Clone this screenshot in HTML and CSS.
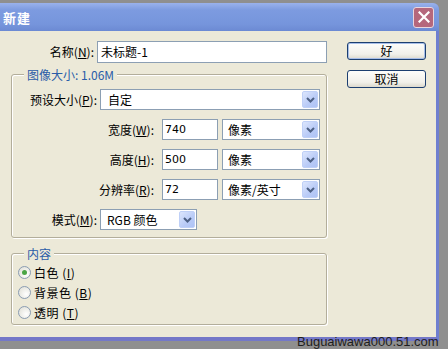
FILE: index.html
```
<!DOCTYPE html>
<html lang="zh-CN">
	<head>
		<meta charset="UTF-8" />
		<title>新建</title>
		<link rel="stylesheet" href="styles.css">
	</head>
	<body>
		<div class="window">
			<div class="titlebar">
				<span class="title">新建</span>
				<span class="close">
					<svg width="12" height="12" viewBox="0 0 12 12"><path d="M1.5 1.5 L10.5 10.5 M10.5 1.5 L1.5 10.5" stroke="#fff" stroke-width="2.2" stroke-linecap="square"/></svg>
				</span>
			</div>
			<div class="dialog">
				<div class="form">
					<div class="row name-row">
						<label class="lbl lbl-name">名称(<u>N</u>):</label>
						<div class="field field-name">未标题-1</div>
					</div>

					<div class="group group-size">
						<span class="legend">图像大小: 1.06M</span>
						<div class="row">
							<label class="lbl lbl-short">预设大小(<u>P</u>):</label>
							<div class="select select-preset"><span>自定</span><span class="arrow"><svg width="9" height="6" viewBox="0 0 9 6"><path d="M1 1 L4.5 4.5 L8 1" fill="none" stroke="#4d6185" stroke-width="2"/></svg></span></div>
						</div>
						<div class="row">
							<label class="lbl lbl-long">宽度(<u>W</u>):</label>
							<div class="field field-num">740</div>
							<div class="select select-unit"><span>像素</span><span class="arrow"><svg width="9" height="6" viewBox="0 0 9 6"><path d="M1 1 L4.5 4.5 L8 1" fill="none" stroke="#4d6185" stroke-width="2"/></svg></span></div>
						</div>
						<div class="row">
							<label class="lbl lbl-long">高度(<u>H</u>):</label>
							<div class="field field-num">500</div>
							<div class="select select-unit"><span>像素</span><span class="arrow"><svg width="9" height="6" viewBox="0 0 9 6"><path d="M1 1 L4.5 4.5 L8 1" fill="none" stroke="#4d6185" stroke-width="2"/></svg></span></div>
						</div>
						<div class="row">
							<label class="lbl lbl-long">分辨率(<u>R</u>):</label>
							<div class="field field-num">72</div>
							<div class="select select-unit"><span>像素/英寸</span><span class="arrow"><svg width="9" height="6" viewBox="0 0 9 6"><path d="M1 1 L4.5 4.5 L8 1" fill="none" stroke="#4d6185" stroke-width="2"/></svg></span></div>
						</div>
						<div class="row">
							<label class="lbl lbl-short">模式(<u>M</u>):</label>
							<div class="select select-mode"><span>RGB 颜色</span><span class="arrow"><svg width="9" height="6" viewBox="0 0 9 6"><path d="M1 1 L4.5 4.5 L8 1" fill="none" stroke="#4d6185" stroke-width="2"/></svg></span></div>
						</div>
					</div>

					<div class="group group-content">
						<span class="legend">内容</span>
						<div class="radio-row"><span class="radio checked"></span>白色 (<u>I</u>)</div>
						<div class="radio-row"><span class="radio"></span>背景色 (<u>B</u>)</div>
						<div class="radio-row"><span class="radio"></span>透明 (<u>T</u>)</div>
					</div>
				</div>

				<div class="actions">
					<button class="btn btn-default">好</button>
					<button class="btn">取消</button>
				</div>
			</div>
		</div>
		<div class="watermark">Buguaiwawa000.51.com</div>
	</body>
</html>
```

FILE: styles.css
```
/* XP style "new document" dialog */
body {
	margin: 0;
	padding: 3px 0 0 0;
	background-color: #8f8f8f;
	font-family: "Noto Sans CJK SC", "DejaVu Sans", sans-serif;
	font-size: 12px;
	color: #000;
	height: 346px;
	position: relative;
	overflow: hidden;
}
.window {
	width: 436px;
	border-right: 3px solid #6f7fd0;
	border-bottom: 4px solid #7478c8;
	border-top-right-radius: 7px;
}
.titlebar {
	height: 28px;
	display: flex;
	align-items: center;
	justify-content: space-between;
	padding: 0 2px 0 3px;
	background: linear-gradient(#9ab2ec, #7d9be0 25%, #7695dc 75%, #6c8ad3);
	border-top-right-radius: 6px;
	margin-right: -3px;
}
.title {
	color: #fff;
	font-weight: bold;
	font-size: 13px;
	letter-spacing: 1px;
}
.close {
	width: 19px;
	height: 19px;
	margin-right: 3px;
	border: 1px solid #e9d6de;
	border-radius: 3px;
	background: #b5677c;
	display: flex;
	align-items: center;
	justify-content: center;
}
.dialog {
	height: 306px;
	background-color: #ece9d8;
	display: flex;
}
.form {
	width: 330px;
	padding-top: 10px;
}
.row {
	display: flex;
	align-items: center;
	height: 21px;
}
.name-row {
	height: 22px;
}
.lbl {
	text-align: right;
	line-height: 14px;
	padding-right: 3px;
	white-space: nowrap;
}
.lbl-name {
	width: 94px;
}
.lbl-short {
	width: 85px;
}
.lbl-long {
	width: 142px;
	padding-right: 8px;
}
.field {
	box-sizing: border-box;
	height: 100%;
	background: #fff;
	border: 1px solid #8c9fb3;
	padding: 0 3px;
	line-height: 19px;
}
.field-name {
	width: 230px;
}
.field-num {
	width: 56px;
	font-family: "DejaVu Sans", sans-serif;
	font-size: 11px;
	padding-left: 2px;
}
.select {
	box-sizing: border-box;
	height: 100%;
	background: #fff;
	border: 1px solid #8c9fb3;
	display: flex;
	align-items: center;
	justify-content: space-between;
	padding: 0 1px 0 7px;
}
.select-preset {
	width: 220px;
}
.select-unit {
	width: 98px;
	margin-left: 4px;
	padding-left: 5px;
}
.select-mode {
	width: 97px;
	padding-left: 6px;
}
.arrow {
	box-sizing: border-box;
	width: 16px;
	height: 17px;
	border: 1px solid #bfd0f7;
	border-radius: 2px;
	background: linear-gradient(135deg, #dce6fd, #b9cbf7 60%, #aec3f5);
	display: flex;
	align-items: center;
	justify-content: center;
}
.group {
	position: relative;
	box-sizing: border-box;
	margin-left: 11px;
	width: 316px;
	border: 1px solid #b3ae9b;
	border-radius: 3px;
	box-shadow: inset 1px 1px 0 #fff, 1px 1px 0 #fff;
}
.group-size {
	margin-top: 11px;
	height: 164px;
	padding-top: 14px;
	display: flex;
	flex-direction: column;
	gap: 9px;
}
.group-content {
	margin-top: 15px;
	height: 72px;
	padding-top: 8px;
}
/* legend sits on top of the group border */
.legend {
	position: absolute;
	top: -8px;
	left: 12px;
	padding: 0 3px;
	background: #ece9d8;
	color: #2a5ca8;
	line-height: 15px;
}
.radio-row {
	display: flex;
	align-items: center;
	height: 20px;
	padding-left: 6px;
	letter-spacing: 0.5px;
}
.radio {
	box-sizing: border-box;
	width: 13px;
	height: 13px;
	border: 1px solid #8a9cb2;
	border-radius: 50%;
	background: radial-gradient(circle at 65% 65%, #fff, #dcdcd2);
	margin-right: 3px;
	display: flex;
	align-items: center;
	justify-content: center;
}
.radio.checked::after {
	content: "";
	width: 5px;
	height: 5px;
	border-radius: 50%;
	background: #4aa544;
}
.actions {
	display: flex;
	flex-direction: column;
	padding: 11px 0 0 17px;
	gap: 10px;
}
.btn {
	box-sizing: border-box;
	width: 79px;
	height: 18px;
	padding: 0;
	border: 1px solid #1c3f70;
	border-radius: 3px;
	background: linear-gradient(#fdfdfb, #f1f0ea 70%, #dcd9cd);
	font-family: "Noto Sans CJK SC", sans-serif;
	font-size: 12px;
	line-height: 14px;
	color: #000;
}
.btn-default {
	box-shadow: inset 0 0 0 1px #a7bee8;
}
.watermark {
	position: absolute;
	left: 297px;
	top: 334px;
	font-family: "Liberation Sans", Arial, sans-serif;
	font-size: 13px;
	line-height: 15px;
	color: #1e1e1e;
}
```
